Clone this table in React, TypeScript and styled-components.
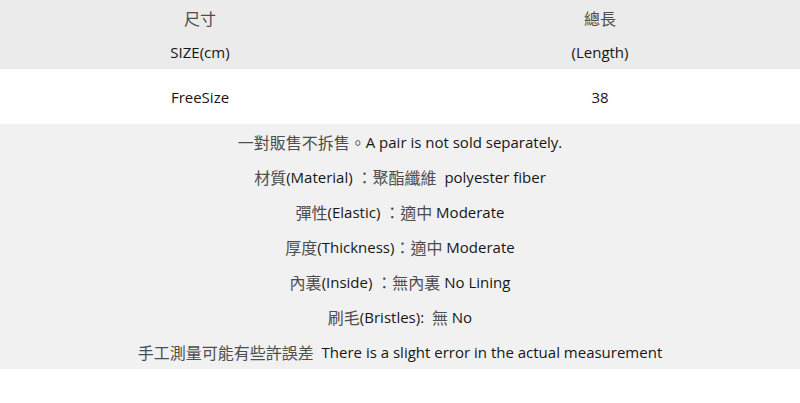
import styled, { createGlobalStyle } from "styled-components";

const Global = createGlobalStyle`
  html, body { margin: 0; padding: 0; background: #fff; }
  body {
    font-family: "Open Sans", "Noto Sans CJK TC", sans-serif;
    font-size: 15px;
    color: #161616;
  }
`;

const Table = styled.div`
  width: 800px;
  display: flex;
  flex-direction: column;
`;

const Row = styled.div<{ $bg: string; $h: number }>`
  display: grid;
  grid-template-columns: 400px 400px;
  height: ${(p) => p.$h}px;
  background: ${(p) => p.$bg};
`;

const Cell = styled.div`
  display: flex;
  align-items: center;
  justify-content: center;
`;

const Cjk = styled.span`
  font-family: "Noto Sans CJK TC", sans-serif;
  font-size: 16px;
  color: #4d4d4d;
`;

const Notes = styled.div`
  display: flex;
  flex-direction: column;
  background: #f1f1f1;
`;

const Line = styled.div`
  height: 35px;
  display: flex;
  align-items: center;
  justify-content: center;
  white-space: pre;
`;

type Part = { zh?: boolean; t: string };

const notes: Part[][] = [
  [{ zh: true, t: "一對販售不拆售。" }, { t: "A pair is not sold separately." }],
  [{ zh: true, t: "材質" }, { t: "(Material) " }, { zh: true, t: "：聚酯纖維" }, { t: "  polyester fiber" }],
  [{ zh: true, t: "彈性" }, { t: "(Elastic) " }, { zh: true, t: "：適中" }, { t: " Moderate" }],
  [{ zh: true, t: "厚度" }, { t: "(Thickness)" }, { zh: true, t: "：適中" }, { t: " Moderate" }],
  [{ zh: true, t: "內裏" }, { t: "(Inside) " }, { zh: true, t: "：無內裏" }, { t: " No Lining" }],
  [{ zh: true, t: "刷毛" }, { t: "(Bristles):  " }, { zh: true, t: "無" }, { t: " No" }],
  [{ zh: true, t: "手工測量可能有些許誤差" }, { t: "  There is a slight error in the actual measurement" }],
];

export default function App() {
  return (
    <>
      <Global />
      <Table>
        <Row $bg="#ebebeb" $h={35}>
          <Cell><Cjk>尺寸</Cjk></Cell>
          <Cell><Cjk>總長</Cjk></Cell>
        </Row>
        <Row $bg="#ebebeb" $h={34}>
          <Cell>SIZE(cm)</Cell>
          <Cell>(Length)</Cell>
        </Row>
        <Row $bg="#ffffff" $h={55}>
          <Cell>FreeSize</Cell>
          <Cell>38</Cell>
        </Row>
        <Notes>
          {notes.map((parts, i) => (
            <Line key={i}>
              {parts.map((p, j) => (p.zh ? <Cjk key={j}>{p.t}</Cjk> : <span key={j}>{p.t}</span>))}
            </Line>
          ))}
        </Notes>
      </Table>
    </>
  );
}
